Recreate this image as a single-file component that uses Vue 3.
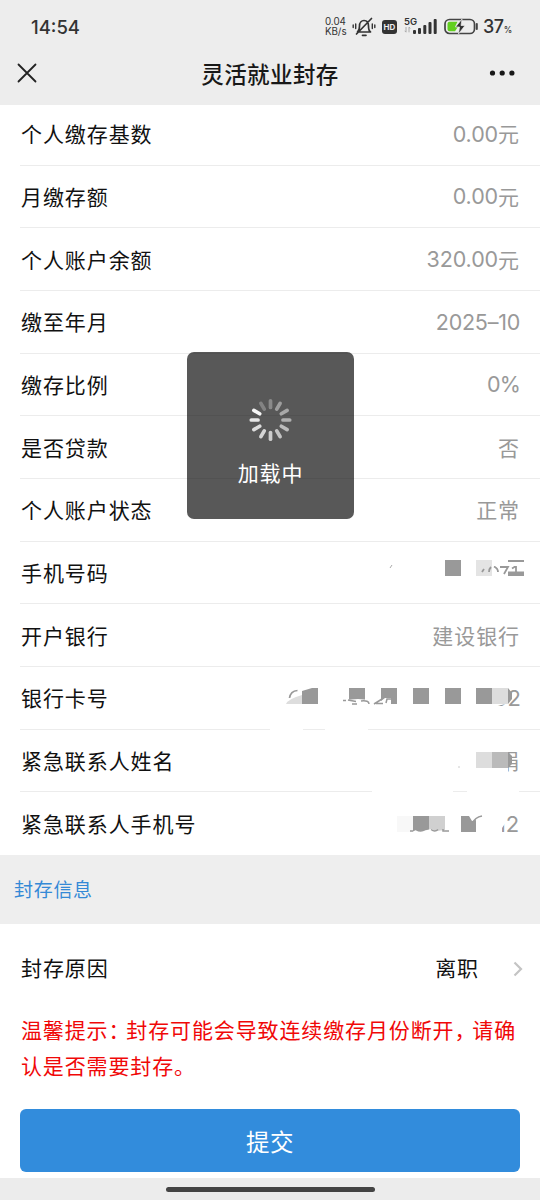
<script setup>
const rows = [
  { label: '个人缴存基数', num: '0.00', cjk: '元' },
  { label: '月缴存额', num: '0.00', cjk: '元' },
  { label: '个人账户余额', num: '320.00', cjk: '元' },
  { label: '缴至年月', num: '2025–10', kind: 'date' },
  { label: '缴存比例', num: '0%', kind: 'percent' },
  { label: '是否贷款', cjk: '否' },
  { label: '个人账户状态', cjk: '正常' },
  { label: '手机号码', mask: 'phone' },
  { label: '开户银行', cjk: '建设银行' },
  { label: '银行卡号', mask: 'card' },
  { label: '紧急联系人姓名', mask: 'name' },
  { label: '紧急联系人手机号', mask: 'contact' }
]
const spokes = [0.3, 0.42, 0.48, 0.53, 0.6, 0.65, 0.7, 0.75, 0.8, 0.86, 0.95, 0.26]
</script>

<template>
  <div class="screen">
    <header class="top">
      <div class="status">
        <span class="clock">14:54</span>
        <div class="indicators">
          <div class="speed"><span>0.04</span><span>KB/s</span></div>
          <svg class="bell" width="24" height="20" viewBox="0 0 24 20" fill="none" stroke="#333" stroke-width="1.7" stroke-linecap="round" stroke-linejoin="round">
            <path d="M5.500 15c1.800-1.300 2-3.500 2-6c0-3.500 2-5.500 4.500-5.500s4.500 2 4.500 5.500c0 2.500 .2 4.700 2 6zM10.500 18.300h3.500M19.500 1.500L4.500 17" />
            <path d="M3.700 7v4.500M1.200 8v2.500M20.300 7v4.500M22.800 8v2.500" stroke-width="1.400" />
          </svg>
          <div class="hd">HD</div>
          <svg class="signal" width="34" height="20" viewBox="0 0 34 20">
            <text x="0" y="8.300" class="net">5G</text>
            <path d="M2 10v5M.8 13.800L2 15.300M5 15.300v-5M5 10l1.200 1.500" stroke="#aaa" fill="none" />
            <g fill="#333">
              <rect x="9" y="13" width="3" height="4" rx="1" />
              <rect x="14" y="11" width="3" height="6" rx="1" />
              <rect x="19.300" y="8" width="3" height="9" rx="1" />
              <rect x="24.500" y="5" width="3" height="12" rx="1" />
              <rect x="29.700" y="2" width="3" height="15" rx="1" />
            </g>
          </svg>
          <svg class="battery" width="35" height="17" viewBox="0 0 35 17">
            <rect x="1" y="1.500" width="29.500" height="14" rx="4.500" fill="none" stroke="#444" stroke-width="1.700" />
            <path d="M5.500 3.800h8l-2.500 5h3l-3 4.400H5.500q-2 0-2-2V5.800q0-2 2-2z" fill="#62cf20" />
            <path d="M18 1l-6.500 8h4l-1 7L21 7.500h-4z" fill="#333" stroke="#ededed" stroke-width=".7" />
            <path d="M32.800 6v5" stroke="#444" stroke-width="2" stroke-linecap="round" />
          </svg>
          <span class="level">37<small>%</small></span>
        </div>
      </div>
      <nav class="nav">
        <svg width="20" height="20" viewBox="0 0 20 20"><path d="M1.500 1.500l17 17M18.500 1.500l-17 17" stroke="#222" stroke-width="1.800" stroke-linecap="round" /></svg>
        <h1>灵活就业封存</h1>
        <svg width="28" height="6" viewBox="0 0 28 6" fill="#181818"><circle cx="4.500" cy="3" r="2.600" /><circle cx="14.200" cy="3" r="2.600" /><circle cx="23.900" cy="3" r="2.600" /></svg>
      </nav>
    </header>

    <main class="body">
      <section class="list">
        <div v-for="row in rows" :key="row.label" class="row">
          <span class="label">{{ row.label }}</span>
          <span v-if="!row.mask" class="value">
            <span v-if="row.num" class="num" :class="row.kind">{{ row.num }}</span><span v-if="row.cjk">{{ row.cjk }}</span>
          </span>
          <svg v-else-if="row.mask === 'phone'" class="mask" width="270" height="62" viewBox="270 541 270 62">
            <defs><clipPath id="cp"><path d="M478 576v-10h45v9h-43z" /></clipPath></defs>
            <path d="M390 568l2-3" stroke="#aaa" />
            <rect x="445" y="560" width="16" height="16" fill="#999" />
            <rect x="476" y="560" width="16" height="16" fill="#e4e4e4" />
            <rect x="508" y="560" width="16" height="2" fill="#999" />
            <rect x="508" y="571.500" width="16" height="4.500" fill="#999" />
            <g clip-path="url(#cp)" fill="none" stroke="#999" stroke-width="1.800"><path d="M482 572l2-3M489 572q0-3 2-5M494 566.500q4 2 4 5.500M500 567h8l-4 7M512 568.500l4-2.500v6" /></g>
          </svg>
          <svg v-else-if="row.mask === 'card'" class="mask" width="270" height="62" viewBox="270 667 270 62">
            <defs><clipPath id="cc"><path d="M497 706l13-3v-16h12v23h-25z" /></clipPath></defs>
            <path d="M286 704q2-5 16-9v9z" fill="#ddd" />
            <path d="M302 704v-13l10-3h6v16z" fill="#999" />
            <path d="M289.500 698q1-7 8-7.500" stroke="#999" stroke-width="1.700" fill="none" />
            <g fill="#999"><rect x="349" y="688" width="16" height="16" /><rect x="381" y="688" width="16" height="16" /><rect x="413" y="688" width="16" height="16" /><rect x="445" y="688" width="16" height="16" /><rect x="476" y="688" width="16" height="16" /></g>
            <path d="M345 704.500v-4.500l13-1 23 2 4-3h6v6.500z" fill="#fff" />
            <path d="M343 700.500h3M348 700l8 1.500M352 704h5M361 701q8-1 8 3M374 704l8-5M376 703.500h7M392 699h-5l-1 4" stroke="#999" stroke-width="1.500" fill="none" />
            <rect x="492" y="688" width="16" height="16" fill="#ddd" />
            <path d="M508 688l4 5v6l-4 5z" fill="#999" />
            <text x="494" y="706" class="mask-num" clip-path="url(#cc)">92</text>
            <path d="M270 729.500h33M325 729.500h43" stroke="#fff" stroke-width="3" />
          </svg>
          <svg v-else-if="row.mask === 'name'" class="mask" width="270" height="62" viewBox="270 729 270 62">
            <defs><clipPath id="cn"><rect x="508" y="750" width="12" height="22" /></clipPath></defs>
            <rect x="476" y="752" width="16" height="16" fill="#ddd" />
            <rect x="492" y="752" width="16" height="16" fill="#bababa" />
            <text x="498" y="769" class="mask-cjk" clip-path="url(#cn)">娟</text>
            <path d="M508 752l4 4v8l-4 4z" fill="#999" />
            <path d="M458 767h2" stroke="#ccc" />
            <path d="M372 791.500h81M467 791.500h52" stroke="#fff" stroke-width="3" />
          </svg>
          <svg v-else class="mask" width="270" height="62" viewBox="270 792 270 62">
            <defs><clipPath id="ct"><path d="M502 832v-4l4-6v-8h16v18z" /></clipPath></defs>
            <rect x="397" y="816" width="16" height="16" fill="#f8f8f8" />
            <rect x="413" y="816" width="16" height="16" fill="#999" />
            <rect x="429" y="816" width="16" height="16" fill="#d0d0d0" />
            <path d="M412 832l4-2 5 1 6-1 4-1 5 2 9-1v3h-33z" fill="#fff" />
            <path d="M410 831h3M416 829.500q5 3 9 0M431 829.500q4 3 7 0M443 829v2h6" stroke="#999" stroke-width="1.500" fill="none" />
            <path d="M461 816h8l3 5 4-1v12h-15z" fill="#999" />
            <path d="M472 824q3-7 10-8" stroke="#999" stroke-width="1.700" fill="none" />
            <text x="497" y="832" class="mask-num" clip-path="url(#ct)">12</text>
          </svg>
        </div>
      </section>

      <h2 class="section-title">封存信息</h2>

      <section class="form">
        <div class="reason">
          <span class="label">封存原因</span>
          <span class="picked">离职</span>
          <svg width="12" height="18" viewBox="0 0 12 18"><path d="M2.500 2.500L9 9l-6.500 6.500" fill="none" stroke="#c4c4c4" stroke-width="2.200" /></svg>
        </div>
        <p class="notice">温馨提示<span class="punct">：</span>封存可能会导致连续缴存月份断开<span class="punct">，</span>请确<br>认是否需要封存。</p>
        <button class="submit">提交</button>
      </section>
    </main>

    <footer class="home"><i></i></footer>

    <div class="toast">
      <svg width="44" height="44" viewBox="-21.500 -22 44 44">
        <line v-for="(o, i) in spokes" :key="i" x1="0" y1="-12.500" x2="0" y2="-19.200" stroke="#fff" stroke-width="3.700" stroke-linecap="round" :stroke-opacity="o" :transform="`rotate(${i * 30})`" />
      </svg>
      <span>加载中</span>
    </div>
  </div>
</template>

<style>
body { margin: 0; }
</style>

<style scoped>
.screen {
  position: relative;
  display: flex;
  flex-direction: column;
  width: 540px;
  height: 1200px;
  overflow: hidden;
  background: #fff;
  font-family: "Noto Sans CJK SC", sans-serif;
}
.top { position: relative; height: 105px; flex: none; background: #ededed; }
.status {
  display: flex;
  justify-content: space-between;
  align-items: center;
  height: 53px;
  padding: 0 28px 0 31px;
  box-sizing: border-box;
  font-family: Inter, sans-serif;
  color: #333;
}
.clock { font-size: 18.500px; font-weight: 500; }
.indicators { display: flex; align-items: center; }
.speed { display: flex; flex-direction: column; width: 27px; font-size: 9.800px; line-height: 9.500px; }
.hd {
  width: 15px;
  height: 14px;
  margin: 0 7px 0 6px;
  border-radius: 3px;
  background: #333;
  color: #ededed;
  font-size: 8px;
  font-weight: 700;
  line-height: 14px;
  text-align: center;
}
.net { font: 600 9.500px Inter, sans-serif; fill: #333; }
.battery { margin-left: 6px; }
.level { margin-left: 4px; font-size: 18px; font-weight: 500; letter-spacing: -.3px; }
.level small { font-size: 8.500px; }
.nav {
  display: flex;
  align-items: center;
  justify-content: space-between;
  height: 40px;
  padding: 0 24px 0 17px;
}
.nav h1 {
  margin: 0 0 0 15px;
  font-size: 22.500px;
  font-weight: 500;
  letter-spacing: .4px;
  color: #181818;
  line-height: 38px;
}
.body { flex: none; height: 1073px; }
.list { height: 750px; margin-top: -2px; display: grid; grid-template-rows: repeat(12, 62.670px); }
.row {
  display: flex;
  justify-content: space-between;
  align-items: center;
  margin-left: 20px;
  padding-right: 20px;
  border-bottom: 1px solid #ececec;
  box-sizing: border-box;
}
.row:last-child { border-color: transparent; }
.label, .value, .picked { font-size: 21px; letter-spacing: .92px; line-height: 30px; color: #111; }
.label, .picked { padding-bottom: 1px; }
.label { padding-left: 1px; }
.value { display: flex; align-items: center; padding-bottom: 1px; color: #999; }
.num { font-family: Inter, sans-serif; font-size: 21.500px; font-weight: 400; letter-spacing: -.1px; padding-top: 1px; }
.date { letter-spacing: -.25px; }
.percent { letter-spacing: -.8px; }
.mask { flex: none; margin-right: -20px; overflow: visible; }
.mask-num { font: 400 22px Inter, sans-serif; fill: #999; letter-spacing: -.2px; }
.mask-cjk { font: 21px "Noto Sans CJK SC", sans-serif; fill: #999; }
.section-title {
  height: 69px;
  margin: 2px 0 0;
  padding-left: 14px;
  background: #eee;
  color: #3489d6;
  font-size: 19px;
  font-weight: 400;
  letter-spacing: .7px;
  line-height: 68px;
}
.form { padding: 0 20px; }
.reason { display: flex; align-items: center; height: 89px; margin-right: -4px; }
.reason .label, .picked { padding-bottom: 3px; }
.picked { margin-left: auto; margin-right: 33px; }
.notice {
  margin: -1px -10px 0 1px;
  color: #f00808;
  font-size: 21px;
  letter-spacing: .87px;
  line-height: 35.500px;
  white-space: nowrap;
}
.punct { margin-right: 6.500px; font-feature-settings: "halt"; }
.submit {
  display: block;
  width: 500px;
  height: 63px;
  margin: 26px 0 0;
  padding: 0;
  border: 0;
  border-radius: 6px;
  background: #328cdc;
  color: #fff;
  font: 23.500px "Noto Sans CJK SC", sans-serif;
  letter-spacing: .5px;
}
.home { display: flex; flex: none; height: 22px; justify-content: center; align-items: center; background: #ececec; }
.home i { width: 209px; height: 5px; border-radius: 3px; background: #444; }
.toast {
  position: absolute;
  left: 187px;
  top: 352px;
  width: 167px;
  height: 167px;
  display: flex;
  flex-direction: column;
  align-items: center;
  padding-top: 46px;
  box-sizing: border-box;
  border-radius: 7px;
  background: rgba(17, 17, 17, .7);
  color: #fff;
  font-size: 21px;
  letter-spacing: .85px;
}
.toast span { margin-top: 15px; line-height: 30px; }
</style>
